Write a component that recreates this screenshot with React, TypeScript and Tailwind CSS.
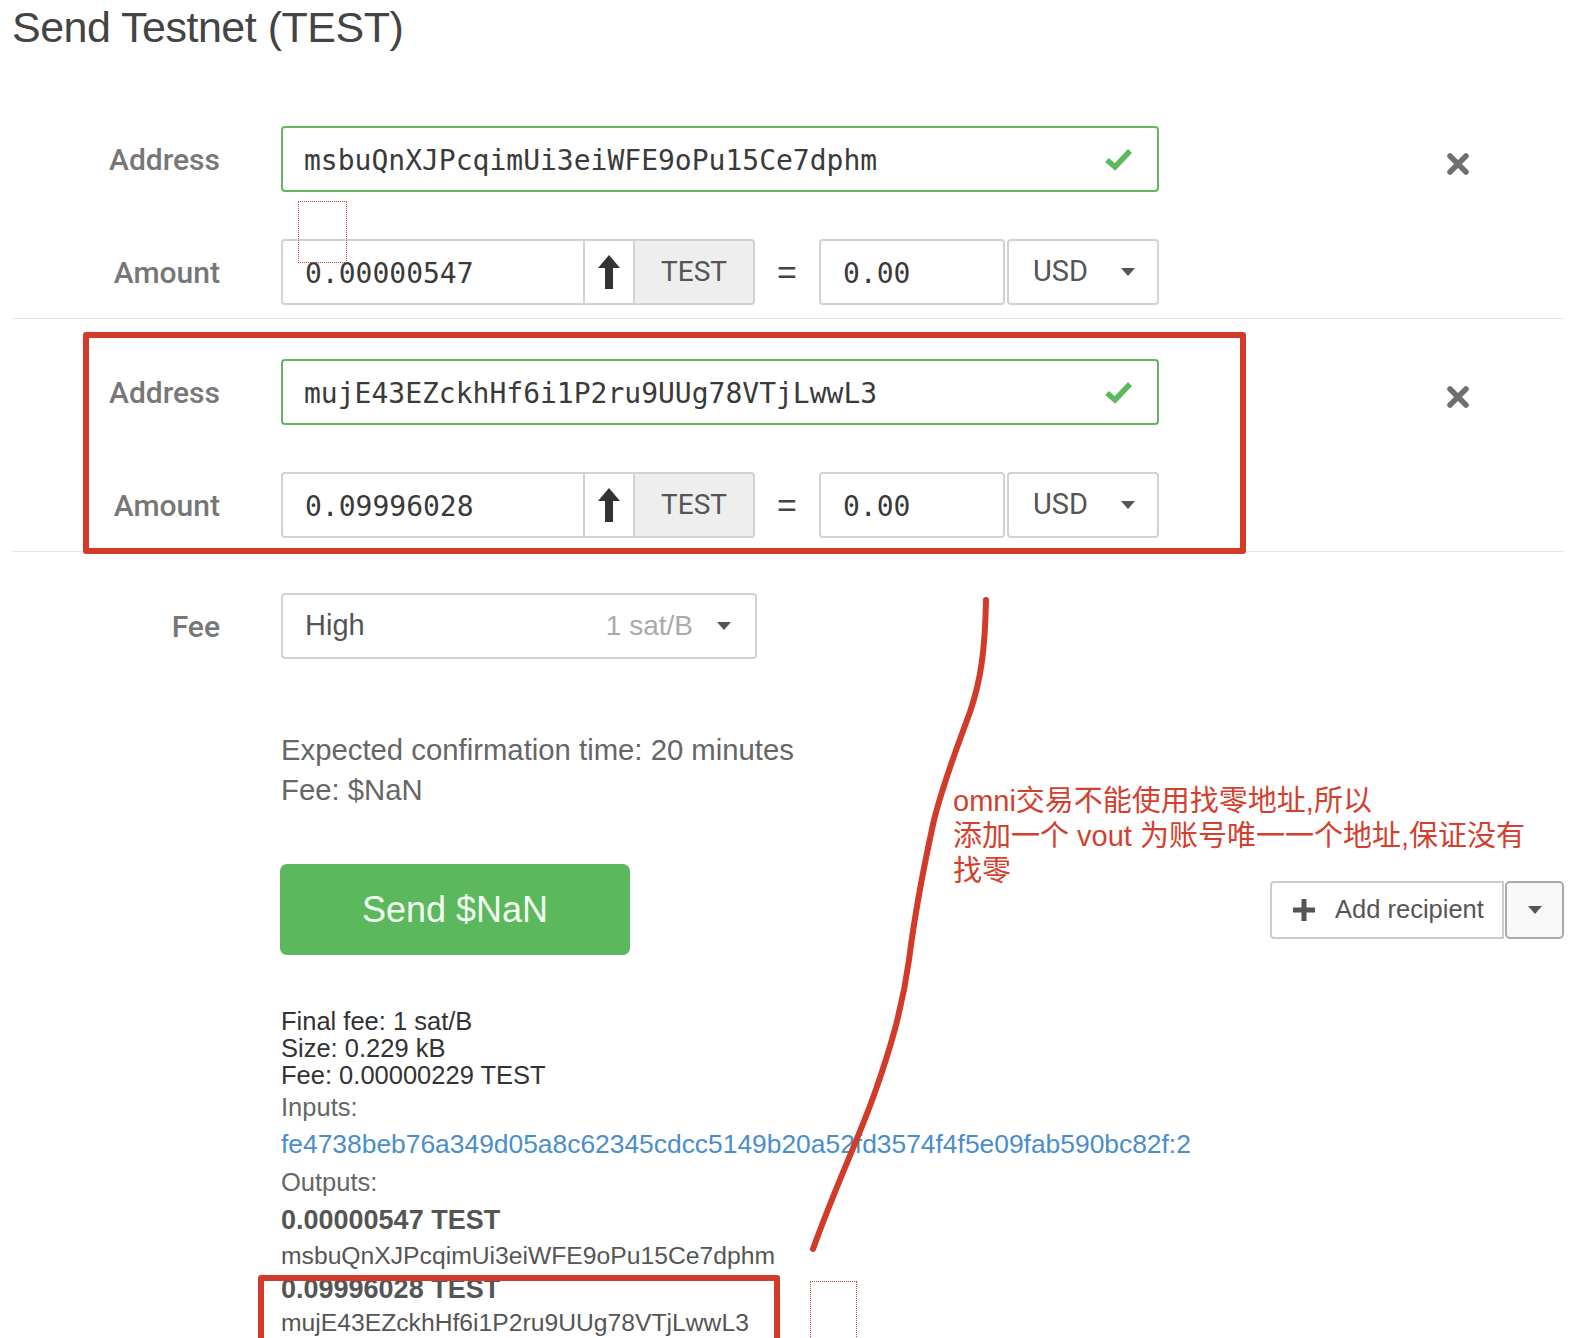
import React from "react";

function Caret() {
  return (
    <svg width="14" height="8" viewBox="0 0 14 8">
      <path d="M0 0h14L7 8z" fill="#555" />
    </svg>
  );
}

function Check() {
  return (
    <svg width="30" height="26" viewBox="0 0 30 26">
      <polyline points="4,14 12,21 27,5" fill="none" stroke="#5cb85c" strokeWidth="5.5" />
    </svg>
  );
}

function Times() {
  return (
    <svg width="24" height="22" viewBox="0 0 24 22">
      <path d="M4 3L20 19M20 3L4 19" stroke="#6f6f6f" strokeWidth="5.5" strokeLinecap="round" />
    </svg>
  );
}

function ArrowUp() {
  return (
    <svg width="22" height="34" viewBox="0 0 22 34">
      <path d="M11 0L22 13H15V34H7V13H0Z" fill="#333" />
    </svg>
  );
}

function Plus() {
  return (
    <svg width="22" height="22" viewBox="0 0 22 22">
      <path d="M8.5 0h5v8.5H22v5h-8.5V22h-5v-8.5H0v-5h8.5z" fill="#555" />
    </svg>
  );
}

function Label({ children }: { children: React.ReactNode }) {
  return (
    <div className="w-[269px] shrink-0 pr-[61px] text-right font-['Roboto',sans-serif] text-[30px] font-medium text-[#777]">
      {children}
    </div>
  );
}

function Recipient({ address, amount }: { address: string; amount: string }) {
  return (
    <div className="mx-[12px] flex flex-col gap-[47px] border-b border-[#e6e6e6] pt-[40px] pb-[13px]">
      <div className="flex items-center">
        <Label>Address</Label>
        <div className="flex h-[66px] w-[878px] items-center justify-between rounded-[4px] border-2 border-[#62b562] pl-[21px] pr-[24px]">
          <span className="pt-[4px] font-['DejaVu_Sans_Mono',monospace] text-[28px] text-[#3a3a3a]">{address}</span>
          <Check />
        </div>
        <div className="ml-[287px] mt-[10px] flex">
          <Times />
        </div>
      </div>
      <div className="flex items-center">
        <Label>Amount</Label>
        <div className="flex h-[66px] w-[878px]">
          <div className="flex w-[304px] items-center rounded-l-[4px] border-2 border-[#d2d2d2] pl-[22px] pt-[4px] font-['DejaVu_Sans_Mono',monospace] text-[28px] text-[#3a3a3a]">
            {amount}
          </div>
          <div className="flex w-[50px] items-center justify-center border-y-2 border-r-2 border-[#d2d2d2] bg-white">
            <ArrowUp />
          </div>
          <div className="flex w-[120px] items-center justify-center rounded-r-[4px] border-y-2 border-r-2 border-[#d2d2d2] bg-[#eee] font-['Roboto',sans-serif] text-[28px] text-[#555]">
            TEST
          </div>
          <div className="flex w-[64px] items-center justify-center text-[34px] text-[#444]">=</div>
          <div className="flex w-[186px] items-center rounded-[4px] border-2 border-[#d2d2d2] pl-[22px] pt-[4px] font-['DejaVu_Sans_Mono',monospace] text-[28px] text-[#3a3a3a]">
            0.00
          </div>
          <div className="ml-[2px] flex flex-1 items-center justify-between rounded-[4px] border-2 border-[#d2d2d2] pl-[24px] pr-[22px] font-['Roboto',sans-serif] text-[29px] text-[#555]">
            <span>USD</span>
            <Caret />
          </div>
        </div>
      </div>
    </div>
  );
}

export default function App() {
  return (
    <div className="relative h-[1338px] overflow-hidden bg-white font-['Liberation_Sans',sans-serif]">
      <h1 className="h-[86px] pl-[12px] pt-[1px] text-[43px] leading-[52px] tracking-[-0.5px] text-[#444]">
        Send Testnet (TEST)
      </h1>

      <Recipient address="msbuQnXJPcqimUi3eiWFE9oPu15Ce7dphm" amount="0.00000547" />
      <Recipient address="mujE43EZckhHf6i1P2ru9UUg78VTjLwwL3" amount="0.09996028" />

      <div className="mx-[12px] mt-[41px] flex items-center">
        <Label>Fee</Label>
        <div className="flex h-[66px] w-[476px] items-center rounded-[4px] border-2 border-[#d2d2d2] pl-[22px] pr-[24px]">
          <span className="flex-1 text-[29px] text-[#555]">High</span>
          <span className="mr-[24px] text-[28px] text-[#aaa]">1 sat/B</span>
          <Caret />
        </div>
      </div>

      <div className="mx-[12px] pl-[269px]">
        <div className="mt-[71px] text-[29.3px] leading-[40px] text-[#666]">
          <div>Expected confirmation time: 20 minutes</div>
          <div>Fee: $NaN</div>
        </div>
      </div>

      <div className="mx-[12px] mt-[54px] flex items-center justify-between pl-[268px]">
        <button className="h-[91px] w-[350px] rounded-[7px] bg-[#5cb85c] text-[36px] text-[#f2fff2]">Send $NaN</button>
        <div className="flex">
          <div className="flex h-[58px] w-[234px] items-center rounded-l-[4px] border-2 border-[#ccc] pl-[21px] text-[25.5px] text-[#555]">
            <Plus />
            <span className="ml-[20px]">Add recipient</span>
          </div>
          <div className="ml-[1px] flex h-[58px] w-[59px] items-center justify-center rounded-[5px] border-2 border-[#a9a9a9] bg-[#f8f8f8]">
            <Caret />
          </div>
        </div>
      </div>

      <div className="mx-[12px] mt-[53px] pl-[269px] text-[25.5px]">
        <div className="leading-[27px] text-[#333]">
          <div>Final fee: 1 sat/B</div>
          <div>Size: 0.229 kB</div>
          <div>Fee: 0.00000229 TEST</div>
        </div>
        <div className="h-[36px] leading-[36px] text-[#666]">Inputs:</div>
        <div className="h-[38px] text-[26.4px] leading-[38px] text-[#4a8ec9]">
          fe4738beb76a349d05a8c62345cdcc5149b20a52fd3574f4f5e09fab590bc82f:2
        </div>
        <div className="h-[39px] leading-[39px] text-[#666]">Outputs:</div>
        <div className="h-[37px] text-[27px] font-bold leading-[37px] text-[#555]">0.00000547 TEST</div>
        <div className="h-[34px] text-[24.7px] leading-[34px] text-[#555]">msbuQnXJPcqimUi3eiWFE9oPu15Ce7dphm</div>
        <div className="h-[33px] text-[27px] font-bold leading-[33px] text-[#555]">0.09996028 TEST</div>
        <div className="h-[34px] text-[24.7px] leading-[34px] text-[#555]">mujE43EZckhHf6i1P2ru9UUg78VTjLwwL3</div>
      </div>

      {/* annotations drawn over the page */}
      <div className="absolute left-[83px] top-[332px] h-[222px] w-[1163px] rounded-[3px] border-[6px] border-[#d23a29]" />
      <div className="absolute left-[258px] top-[1275px] h-[80px] w-[522px] rounded-[3px] border-[6px] border-[#d23a29]" />
      <div className="absolute left-[298px] top-[201px] h-[62px] w-[49px] border-[1.5px] border-dotted border-[#c44a3a]" />
      <div className="absolute left-[810px] top-[1281px] h-[70px] w-[47px] border-[1.5px] border-dotted border-[#c44a3a]" />
      <svg className="pointer-events-none absolute left-0 top-0" width="1576" height="1338">
        <path
          d="M986 600 C985 650 981 680 970 712 C958 745 944 780 934 820 C923 870 914 920 909 960 C902 1010 890 1050 874 1095 C858 1140 838 1180 813 1249"
          fill="none"
          stroke="#d23a29"
          strokeWidth="6"
          strokeLinecap="round"
        />
      </svg>
      <div className="absolute left-[953px] top-[784px] font-['Liberation_Sans','Noto_Sans_CJK_SC',sans-serif] text-[29px] leading-[35px] text-[#d4402e]">
        <div>omni交易不能使用找零地址,所以</div>
        <div>添加一个 vout 为账号唯一一个地址,保证没有</div>
        <div>找零</div>
      </div>
    </div>
  );
}
